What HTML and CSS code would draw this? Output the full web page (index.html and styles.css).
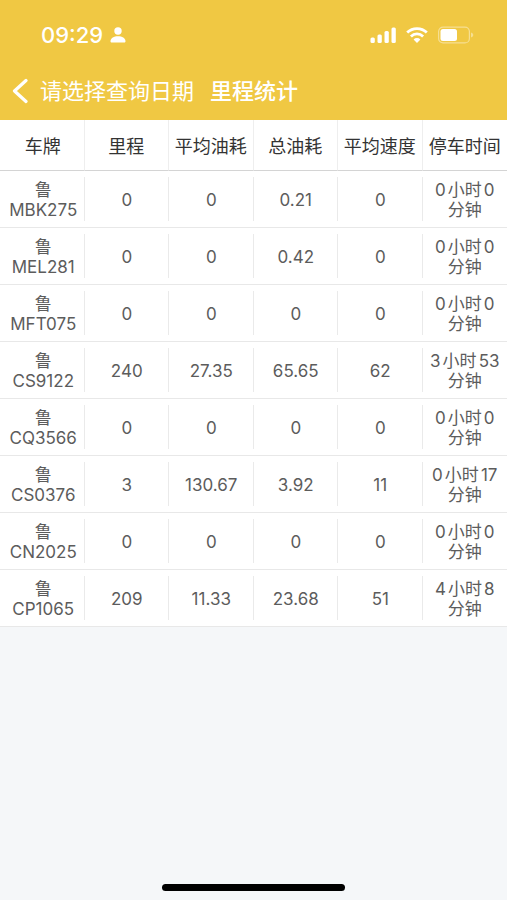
FILE: index.html
```html
<!DOCTYPE html>
<html lang="zh-CN">
<head>
    <meta charset="UTF-8">
    <meta name="viewport" content="width=device-width, initial-scale=1.0">
    <title>里程统计</title>
    <link rel="stylesheet" href="styles.css">
</head>
<body>
<header class="header">
    <!-- 状态栏 -->
    <div class="status">
        <span class="time">09:29</span>
        <svg class="icon-user" width="16" height="18" viewBox="0 0 16 18" fill="#fff">
            <circle cx="8" cy="5" r="3.7"/>
            <path d="M0.5 15.2C0.5 12.300 4 10.300 8 10.300s7.500 2 7.500 4.900c0 .8-.5 1.300-1.300 1.300H1.800c-.8 0-1.300-.5-1.300-1.300z"/>
        </svg>
        <div class="status-right">
            <svg width="26" height="18" viewBox="0 0 26 18" fill="#fff">
                <rect x="0.500" y="11.500" width="4.300" height="5.500" rx="1.500"/>
                <rect x="7.500" y="8.500" width="4.300" height="8.500" rx="1.500"/>
                <rect x="14.500" y="5" width="4.300" height="12" rx="1.500"/>
                <rect x="21.500" y="1.500" width="4.300" height="15.500" rx="1.500"/>
            </svg>
            <svg width="22" height="18" viewBox="0 0 22 18" fill="none" stroke="#fff" stroke-width="2.800">
                <path d="M1.200 6.600a14 14 0 0 1 19.600 0"/>
                <path d="M4.900 10.400a8.700 8.700 0 0 1 12.200 0"/>
                <path d="M11 17l-3.400-3.500a4.800 4.800 0 0 1 6.800 0z" fill="#fff" stroke="none"/>
            </svg>
            <svg width="36" height="18" viewBox="0 0 36 18">
                <rect x="0.600" y="1.100" width="30.800" height="15.800" rx="4.500" fill="none" stroke="#fff" stroke-opacity=".42" stroke-width="1.200"/>
                <rect x="2.500" y="3" width="16.500" height="12" rx="2.500" fill="#fff"/>
                <path d="M33 6.500c3 .8 3 4.200 0 5z" fill="#fff" fill-opacity=".42"/>
            </svg>
        </div>
    </div>
    <!-- 导航 -->
    <nav class="nav">
        <a class="back" href="#" aria-label="返回">
            <svg width="16" height="26" viewBox="0 0 16 26" fill="none" stroke="#fff" stroke-width="3.200" stroke-linecap="round" stroke-linejoin="round">
                <path d="M14 2.500L2.500 13L14 23.500"/>
            </svg>
        </a>
        <button class="date" type="button">请选择查询日期</button>
        <h1 class="title">里程统计</h1>
    </nav>
</header>

<main class="main">
    <table class="table">
        <thead>
            <tr><th>车牌</th><th>里程</th><th>平均油耗</th><th>总油耗</th><th>平均速度</th><th>停车时间</th></tr>
        </thead>
        <tbody>
            <tr><td>鲁<br>MBK275</td><td>0</td><td>0</td><td>0.21</td><td>0</td><td>0小时0<br>分钟</td></tr>
            <tr><td>鲁<br>MEL281</td><td>0</td><td>0</td><td>0.42</td><td>0</td><td>0小时0<br>分钟</td></tr>
            <tr><td>鲁<br>MFT075</td><td>0</td><td>0</td><td>0</td><td>0</td><td>0小时0<br>分钟</td></tr>
            <tr><td>鲁<br>CS9122</td><td>240</td><td>27.35</td><td>65.65</td><td>62</td><td>3小时53<br>分钟</td></tr>
            <tr><td>鲁<br>CQ3566</td><td>0</td><td>0</td><td>0</td><td>0</td><td>0小时0<br>分钟</td></tr>
            <tr><td>鲁<br>CS0376</td><td>3</td><td>130.67</td><td>3.92</td><td>11</td><td>0小时17<br>分钟</td></tr>
            <tr><td>鲁<br>CN2025</td><td>0</td><td>0</td><td>0</td><td>0</td><td>0小时0<br>分钟</td></tr>
            <tr><td>鲁<br>CP1065</td><td>209</td><td>11.33</td><td>23.68</td><td>51</td><td>4小时8<br>分钟</td></tr>
        </tbody>
    </table>
</main>

<div class="home-bar"></div>
</body>
</html>
```
FILE: styles.css
```css
*{
    padding: 0;
    margin: 0;
    box-sizing: border-box;
}
body{
    display: flex;
    flex-direction: column;
    min-height: 100vh;
    font-family: Inter,"Noto Sans CJK SC",sans-serif;
    font-size: 17px;
    color: #5c5c5c;
    background: #f5f7f9;
    text-autospace: normal;/*中英文之间留空*/
}
svg{
    display: block;
}

/*顶部*/
.header{
    color: #fff;
    background: #f0c843;
}
.status{
    display: flex;
    align-items: center;
    height: 62px;
    padding: 8px 33px 0 41px;
}
.time{
    font-size: 22px;
    font-weight: 500;
}
.icon-user{
    margin-left: 7px;
}
.status-right{
    display: flex;
    align-items: center;
    gap: 10px;
    margin-left: auto;
}
.nav{
    display: flex;
    align-items: center;
    height: 58px;
    padding: 0 12px;
}
.date,
.title{
    padding-bottom: 4px;
    font-size: 22px;
}
.date{
    margin-left: 12px;
    border: 0;
    background: none;
    font-family: inherit;
    font-weight: 400;
    color: #fff;
}
.title{
    margin-left: 16px;
    font-weight: 500;
}

/*表格*/
.main{
    flex: 1;
}
.table{
    width: 100%;
    table-layout: fixed;
    border-spacing: 0;
    background: #fff;
    text-align: center;
    line-height: 20px;
}
.table th{
    height: 51px;
    padding-top: 3px;
    font-size: 18px;
    font-weight: 400;
    color: #333;
    white-space: nowrap;
    border-right: 1px solid #eee;
    border-bottom: 1px solid #d4d4d4;
}
.table td{
    padding: 9px 0 7px;
    border-bottom: 1px solid #e8e8e8;
    white-space: nowrap;
    /*竖线上下留空*/
    background: linear-gradient(#eaeaea,#eaeaea) no-repeat right center / 1px 44px;
}
.table th:first-child,
.table td:first-child{
    padding-left: 2px;
}
.table th:last-child{
    border-right: 0;
}
.table td:last-child{
    background: none;
}

.home-bar{
    width: 36%;
    height: 7px;
    margin: 0 auto 9px;
    border-radius: 4px;
    background: #000;
}
```
